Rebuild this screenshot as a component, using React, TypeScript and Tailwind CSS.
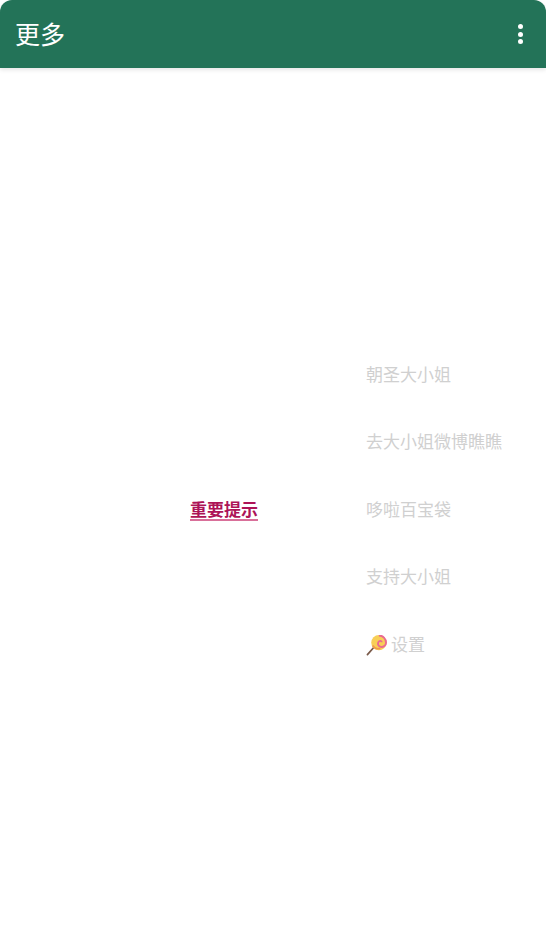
const MENU = ['朝圣大小姐', '去大小姐微博瞧瞧', '哆啦百宝袋', '支持大小姐'];

function Lollipop() {
  return (
    <svg width="21" height="21" viewBox="0 0 22 22" className="shrink-0">
      <path d="M9 12 L1.500 20.500" stroke="#7a5a4a" strokeWidth="1.800" strokeLinecap="round" />
      <circle cx="13.500" cy="8" r="8" fill="#f8cf57" />
      <path d="M13.500 .5a7.500 7.500 0 0 1 7.500 7.500c0 3-3 5-5.500 4.500s-3.500-3-2.500-5 3.500-1.500 3.500 0" fill="none" stroke="#ea6a92" strokeWidth="2" />
      <path d="M7 11c1.500 3 5 4 8 3" fill="none" stroke="#f09a4a" strokeWidth="1.800" />
    </svg>
  );
}

export default function App() {
  return (
    <div className="flex h-[946px] w-[546px] flex-col overflow-hidden bg-white font-['Roboto','Noto_Sans_CJK_SC',sans-serif]">
      <header className="z-10 flex h-[68px] shrink-0 items-center justify-between rounded-t-xl bg-[#237358] pl-[15px] pr-[23px] shadow-[0_2px_4px_rgba(0,0,0,0.1)]">
        <h1 className="pt-[3px] text-[25px] font-normal text-white">更多</h1>
        <div className="flex flex-col gap-[2.5px]">
          <span className="h-[5px] w-[5px] rounded-full bg-white" />
          <span className="h-[5px] w-[5px] rounded-full bg-white" />
          <span className="h-[5px] w-[5px] rounded-full bg-white" />
        </div>
      </header>
      <main className="flex flex-1 items-center pl-[190px] pt-[7px]">
        <a className="w-[176px] shrink-0 text-[17px] font-bold text-[#ad1457] underline decoration-[#d9709a] decoration-2 underline-offset-[3px]">重要提示</a>
        <ul className="flex flex-col text-[17px] text-[#d0d0d0]">
          {MENU.map(item => (
            <li key={item} className="flex h-[67.6px] items-center">{item}</li>
          ))}
          <li className="flex h-[67.6px] items-center gap-[4px]">
            <Lollipop />
            设置
          </li>
        </ul>
      </main>
    </div>
  );
}
